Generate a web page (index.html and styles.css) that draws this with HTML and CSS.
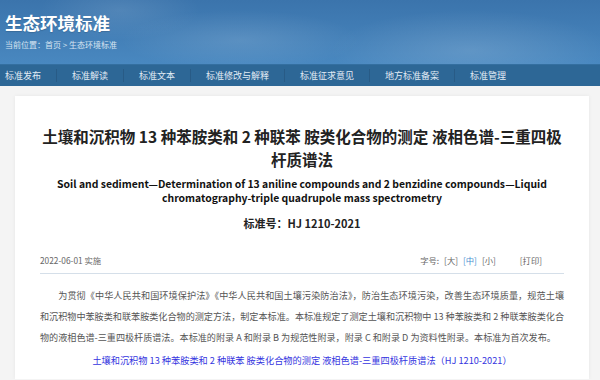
FILE: index.html
```html
<!DOCTYPE html>
<html lang="zh-CN">

<head>
    <meta charset="UTF-8">
    <meta name="viewport" content="width=device-width, initial-scale=1.0">
    <title>生态环境标准</title>
    <link rel="stylesheet" href="styles.css">
</head>

<body>

    <header class="banner">
        <h1>生态环境标准</h1>
        <p class="crumbs">当前位置：首页 &gt; 生态环境标准</p>
    </header>

    <nav class="menu">
        <a href="#">标准发布</a>
        <a href="#">标准解读</a>
        <a href="#">标准文本</a>
        <a href="#">标准修改与解释</a>
        <a href="#">标准征求意见</a>
        <a href="#">地方标准备案</a>
        <a href="#">标准管理</a>
    </nav>

    <main class="article">
        <h2 class="title">土壤和沉积物 13 种苯胺类和 2 种联苯 胺类化合物的测定 液相色谱-三重四极<br>杆质谱法</h2>
        <p class="title-en" lang="en">Soil and sediment—Determination of 13 aniline compounds and 2 benzidine compounds—Liquid<br>chromatography-triple quadrupole mass spectrometry</p>
        <p class="code">标准号：HJ 1210-2021</p>

        <div class="meta">
            <span>2022-06-01 实施</span>
            <div class="tools">
                <span>字号:</span>
                <a href="#">[大]</a>
                <a href="#" class="active">[中]</a>
                <a href="#">[小]</a>
                <a href="#" class="print">[打印]</a>
            </div>
        </div>

        <p class="body-text">为贯彻《中华人民共和国环境保护法》《中华人民共和国土壤污染防治法》，防治生态环境污染，改善生态环境质量，规范土壤和沉积物中苯胺类和联苯胺类化合物的测定方法，制定本标准。本标准规定了测定土壤和沉积物中 13 种苯胺类和 2 种联苯胺类化合物的液相色谱-三重四极杆质谱法。本标准的附录 A 和附录 B 为规范性附录，附录 C 和附录 D 为资料性附录。本标准为首次发布。</p>

        <p class="file-link"><a href="#">土壤和沉积物 13 种苯胺类和 2 种联苯 胺类化合物的测定 液相色谱-三重四极杆质谱法（HJ 1210-2021）</a></p>
    </main>

</body>

</html>
```

FILE: styles.css
```css
body {
    font-family: "Noto Sans CJK SC", "Noto Sans", sans-serif;
    margin: 0;
    padding: 0;
    background-color: #f4f4f4;
    overflow: hidden;
}

a {
    text-decoration: none;
}

.banner {
    height: 64px;
    padding: 0 5px;
    box-sizing: border-box;
    background:
        radial-gradient(ellipse 120px 30px at 240px 40px, rgba(255, 255, 255, 0.12), transparent),
        radial-gradient(ellipse 140px 40px at 470px 50px, rgba(255, 255, 255, 0.14), transparent),
        radial-gradient(ellipse 80px 30px at 120px 10px, rgba(255, 255, 255, 0.1), transparent),
        linear-gradient(#3b74ac, #4988c0);
    overflow: hidden;
}

.banner h1 {
    margin: 0;
    padding-top: 11px;
    font-size: 17.5px;
    line-height: 24px;
    font-weight: 700;
    color: #ffffff;
    text-shadow: 0 1px 1px rgba(0, 0, 0, 0.15);
}

.crumbs {
    margin: 4px 0 0;
    font-size: 8px;
    line-height: 12px;
    color: #d6e4f1;
}

.menu {
    display: flex;
    align-items: center;
    height: 21px;
    padding-left: 5px;
    background-color: #2d6796;
    border-top: 1px solid #346fa0;
}

.menu a {
    font-size: 9px;
    line-height: 13px;
    color: #e2ecf5;
    padding: 0 15px;
    border-left: 1px solid #285b86;
}

.menu a:first-child {
    padding-left: 0;
    border-left: none;
}

.article {
    margin: 10px 11px 0 15px;
    padding: 29px 25px 8px;
    background-color: #ffffff;
    box-shadow: 0 0 4px rgba(0, 0, 0, 0.06);
}

.title {
    margin: 0 -4px;
    font-size: 15.5px;
    line-height: 23px;
    font-weight: 700;
    color: #222;
    text-align: center;
}

.title-en {
    margin: 6px 0 0;
    font-size: 10.4px;
    line-height: 14px;
    font-weight: 700;
    color: #111;
    text-align: center;
}

.code {
    margin: 11px 0 0;
    font-size: 11px;
    line-height: 14px;
    font-weight: 700;
    color: #222;
    text-align: center;
}

.meta {
    display: flex;
    justify-content: space-between;
    align-items: center;
    margin-top: 23px;
    padding: 0 22px 6px 0;
    border-bottom: 1px solid #d5dfe9;
    font-size: 8.3px;
    line-height: 14px;
    color: #666;
}

.tools {
    display: flex;
    gap: 5px;
}

.tools a {
    color: #666;
}

.tools a.active {
    color: #4a8fd0;
}

.tools a.print {
    margin-left: 19px;
}

.body-text {
    margin: 11px 0 0;
    font-size: 9.1px;
    line-height: 21px;
    color: #555;
    text-indent: 2em;
    text-align: justify;
}

.file-link {
    margin: 2px 0 0;
    font-size: 9.2px;
    line-height: 21px;
    text-align: center;
}

.file-link a {
    color: #3535e0;
}
```
